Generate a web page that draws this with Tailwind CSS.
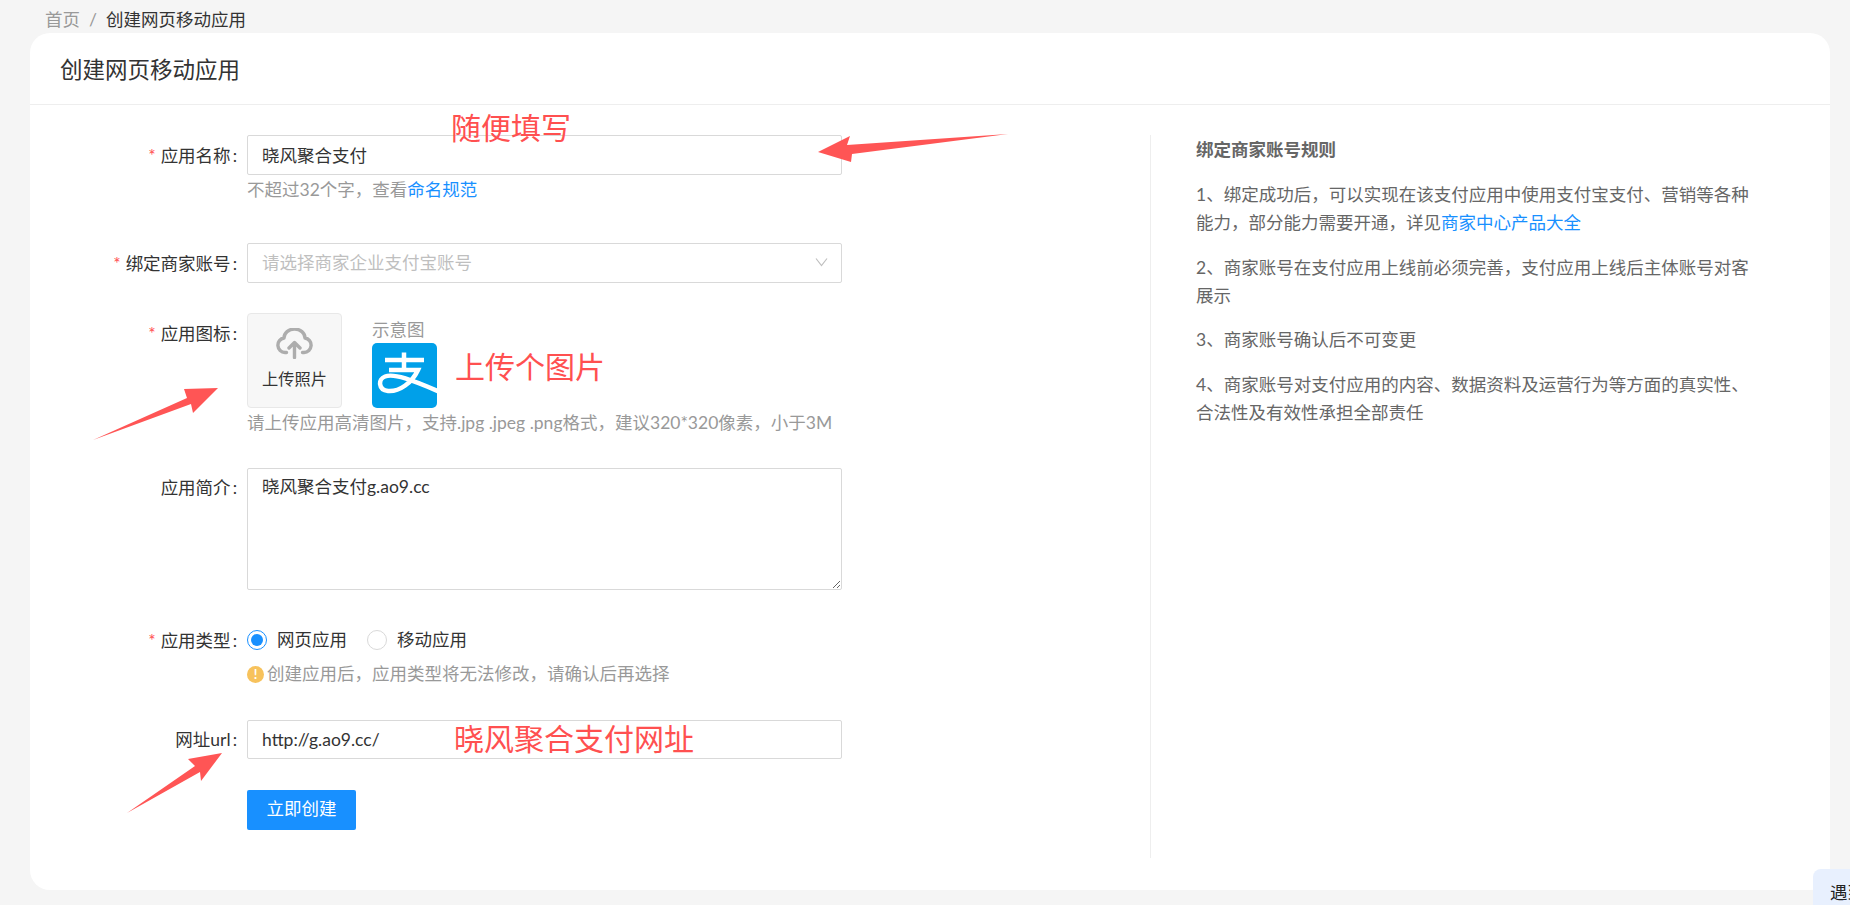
<!doctype html>
<html lang="zh-CN">
<head>
<meta charset="utf-8">
<title>创建网页移动应用</title>
<script src="https://cdn.jsdelivr.net/npm/@tailwindcss/browser@4"></script>
</head>
<body class="m-0 bg-[#f5f5f5]">
<div class="relative w-[1850px] h-[905px] overflow-hidden bg-[#f5f5f5] font-['Lato','Noto_Sans_CJK_SC','Liberation_Sans',sans-serif] text-[17.5px] text-[#333]">
  <nav class="h-[33px] pl-[45px] pt-[6px] leading-[28px] flex text-[#999]">
    <span>首页</span><span class="mx-[9px]">/</span><span class="text-[#333]">创建网页移动应用</span>
  </nav>
  <main class="ml-[30px] w-[1800px] h-[857px] bg-white rounded-[20px]">
    <header class="h-[72px] pl-[30px] pt-[2px] border-b border-[#eeeeee] flex items-center text-[22.5px] text-[#333]">创建网页移动应用</header>
    <div class="flex pt-[30px]">
      <section class="w-[1121px] h-[723px] border-r border-[#eeeeee] flex flex-col">
        <div class="flex">
          <label class="w-[207px] h-[40px] mr-[10px] text-right leading-[41px]"><span class="text-[#ff4d4f] mr-[5px]">*</span>应用名称<span class="ml-[2px]">:</span></label>
          <div class="w-[595px]">
            <input class="w-full h-[40px] border border-[#d9d9d9] rounded-[2px] px-[14px] pb-[2px] outline-none text-[#333]" value="晓风聚合支付">
            <p class="leading-[30px] h-[28px] text-[#999]">不超过32个字，查看<a class="text-[#1890ff]">命名规范</a></p>
          </div>
        </div>
        <div class="flex mt-[40px]">
          <label class="w-[207px] h-[40px] mr-[10px] text-right leading-[41px]"><span class="text-[#ff4d4f] mr-[5px]">*</span>绑定商家账号<span class="ml-[2px]">:</span></label>
          <div class="relative w-[595px] h-[40px] border border-[#d9d9d9] rounded-[2px] px-[14px] leading-[38px] text-[#bfbfbf]">
            请选择商家企业支付宝账号
            <svg class="absolute right-[13px] top-[13px]" width="13" height="10" viewBox="0 0 13 10" fill="none" stroke="#bfbfbf" stroke-width="1.2"><path d="M1 1.500 6.500 8.500 12 1.500"/></svg>
          </div>
        </div>
        <div class="flex mt-[30px]">
          <label class="w-[207px] h-[40px] mr-[10px] text-right leading-[41px]"><span class="text-[#ff4d4f] mr-[5px]">*</span>应用图标<span class="ml-[2px]">:</span></label>
          <div class="w-[620px]">
            <div class="flex h-[95px]">
              <div class="w-[95px] h-[95px] bg-[#f7f7f7] border border-[#e8e8e8] rounded-[4px] flex flex-col items-center pt-[14px]">
                <svg width="37" height="31" viewBox="0 0 37 31" fill="none" stroke="#adadad" stroke-width="3.4" stroke-linecap="round" stroke-linejoin="round"><path d="M10.500 24.500H9A7.300 7.300 0 0 1 8 10 A10.500 9 0 0 1 29 10 A7.300 7.300 0 0 1 28 24.500H26.500"/><path d="M18.500 29.500V15M13 20l5.500-5.500L24 20"/></svg>
                <span class="text-[16.25px] leading-[22px] mt-[9px] text-[#333]">上传照片</span>
              </div>
              <div class="ml-[30px] flex flex-col">
                <span class="h-[30px] leading-[33px] text-[#999]">示意图</span>
                <svg width="65" height="65" viewBox="0 0 65 65" class="rounded-[5px] bg-[#00a0e9]" fill="none" stroke="#fff" stroke-width="4.500"><path d="M13 17H52M32 9.500V27M17 27H46C40 40 27 49 16 48 6 47 6 36 13 33.500 22 30 40 37 68 49"/></svg>
              </div>
            </div>
            <p class="leading-[30px] text-[#999]">请上传应用高清图片，支持.jpg .jpeg .png格式，建议320*320像素，小于3M</p>
          </div>
        </div>
        <div class="flex mt-[30px]">
          <label class="w-[207px] mr-[10px] text-right leading-[40px]">应用简介<span class="ml-[2px]">:</span></label>
          <textarea class="block w-[595px] h-[122px] border border-[#d9d9d9] rounded-[2px] px-[14px] py-[4px] leading-[28px] outline-none text-[#333]">晓风聚合支付g.ao9.cc</textarea>
        </div>
        <div class="flex mt-[30px]">
          <label class="w-[207px] h-[40px] mr-[10px] text-right leading-[42px]"><span class="text-[#ff4d4f] mr-[5px]">*</span>应用类型<span class="ml-[2px]">:</span></label>
          <div class="w-[595px]">
            <div class="flex items-center h-[40px]">
              <span class="w-[20px] h-[20px] rounded-full border border-[#1890ff] flex items-center justify-center"><span class="w-[12px] h-[12px] rounded-full bg-[#1890ff]"></span></span>
              <span class="ml-[10px]">网页应用</span>
              <span class="ml-[20px] w-[20px] h-[20px] rounded-full border border-[#d9d9d9]"></span>
              <span class="ml-[10px]">移动应用</span>
            </div>
            <p class="flex items-center h-[28px] text-[#999]">
              <span class="w-[17px] h-[17px] mr-[3px] rounded-full bg-[#f7c25c] text-white text-[13px] leading-[17px] text-center font-bold">!</span>创建应用后，应用类型将无法修改，请确认后再选择
            </p>
          </div>
        </div>
        <div class="flex mt-[32px]">
          <label class="w-[207px] h-[39px] mr-[10px] text-right leading-[40px]">网址url<span class="ml-[2px]">:</span></label>
          <input class="w-[595px] h-[39px] border border-[#d9d9d9] rounded-[2px] px-[14px] pb-[1px] outline-none text-[#333]" value="http://g.ao9.cc/">
        </div>
        <div class="pl-[217px] mt-[31px]">
          <button class="w-[109px] h-[40px] bg-[#1890ff] text-white rounded-[2px] pb-[1px]">立即创建</button>
        </div>
      </section>
      <aside class="pl-[45px] w-[606px] text-[#666] leading-[28px]">
        <h2 class="font-bold mt-[1px]">绑定商家账号规则</h2>
        <p class="mt-[17px]">1、绑定成功后，可以实现在该支付应用中使用支付宝支付、营销等各种能力，部分能力需要开通，详见<a class="text-[#1890ff]">商家中心产品大全</a></p>
        <p class="mt-[16.500px]">2、商家账号在支付应用上线前必须完善，支付应用上线后主体账号对客展示</p>
        <p class="mt-[16.500px]">3、商家账号确认后不可变更</p>
        <p class="mt-[16.500px]">4、商家账号对支付应用的内容、数据资料及运营行为等方面的真实性、合法性及有效性承担全部责任</p>
      </aside>
    </div>
  </main>

  <span class="absolute left-[451px] top-[105px] text-[30px] leading-[44px] text-[#ff5050]">随便填写</span>
  <span class="absolute left-[455px] top-[344px] text-[30px] leading-[44px] text-[#ff5050]">上传个图片</span>
  <span class="absolute left-[454px] top-[716px] text-[30px] leading-[44px] text-[#ff5050]">晓风聚合支付网址</span>

  <svg class="absolute left-0 top-0 pointer-events-none" width="1850" height="905" fill="#ff5555">
    <polygon points="818,152 850,136 847,145 1008,134 852,154 851,162"/>
    <polygon points="218,388 184,389 187,398 93,440 191,404 193,413"/>
    <polygon points="222,753 188,759 195,766 127,813 200,772 201,781"/>
  </svg>

  <div class="absolute left-[1813px] top-[869px] w-[37px] h-[36px] overflow-hidden bg-[#e8f0fe] rounded-tl-[8px] pl-[17px] pt-[10px] text-[17.5px] leading-[28px] text-[#222] whitespace-nowrap">遇到问题</div>
</div>
</body>
</html>
